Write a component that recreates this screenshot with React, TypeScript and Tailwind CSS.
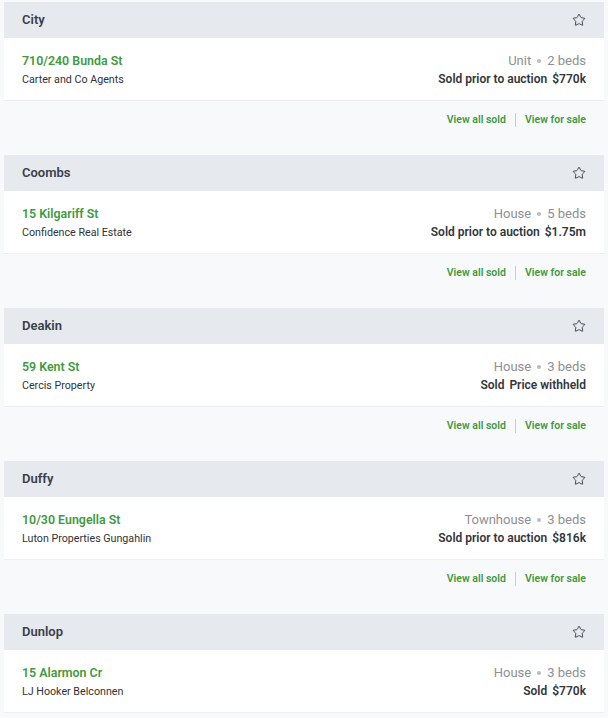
import { Star } from 'lucide-react';

interface Suburb {
  name: string;
  address: string;
  agent: string;
  type: string;
  beds: number;
  method: string;
  price: string;
}

const suburbs: Suburb[] = [
  { name: 'City', address: '710/240 Bunda St', agent: 'Carter and Co Agents', type: 'Unit', beds: 2, method: 'Sold prior to auction', price: '$770k' },
  { name: 'Coombs', address: '15 Kilgariff St', agent: 'Confidence Real Estate', type: 'House', beds: 5, method: 'Sold prior to auction', price: '$1.75m' },
  { name: 'Deakin', address: '59 Kent St', agent: 'Cercis Property', type: 'House', beds: 3, method: 'Sold', price: 'Price withheld' },
  { name: 'Duffy', address: '10/30 Eungella St', agent: 'Luton Properties Gungahlin', type: 'Townhouse', beds: 3, method: 'Sold prior to auction', price: '$816k' },
  { name: 'Dunlop', address: '15 Alarmon Cr', agent: 'LJ Hooker Belconnen', type: 'House', beds: 3, method: 'Sold', price: '$770k' },
];

function SuburbCard({ suburb }: { suburb: Suburb }) {
  return (
    <div className="mx-1">
      {/* Suburb header */}
      <div className="flex h-9 items-center justify-between bg-[#e6e9ed] px-[18px]">
        <h3 className="text-[13px] font-semibold text-[#3a3f4a]">{suburb.name}</h3>
        <Star className="h-[14px] w-[14px] text-[#3a3f4a]" strokeWidth={1.6} />
      </div>

      {/* Latest sale */}
      <div className="flex h-[63px] items-center justify-between border-b border-[#eceef1] bg-white px-[18px]">
        <div className="flex flex-col gap-[2px] pt-[1px]">
          <span className="text-[12.4px] font-semibold leading-[18px] text-[#3f9a3f]">{suburb.address}</span>
          <span className="text-[10.7px] leading-[16px] text-[#2f3338]">{suburb.agent}</span>
        </div>
        <div className="flex flex-col items-end gap-[1px]">
          <span className="flex items-center gap-[6px] text-[13px] leading-[18px] text-[#8d8f93]">
            {suburb.type}
            <span className="h-[4px] w-[4px] rounded-full bg-[#b9bcc0]" />
            {suburb.beds} beds
          </span>
          <span className="text-[12px] font-semibold leading-[16px] text-[#33363b]">
            {suburb.method}
            <span className="ml-[5px]">{suburb.price}</span>
          </span>
        </div>
      </div>

      {/* Links */}
      <div className="flex h-[54px] items-center justify-end gap-[9px] px-[18px] pb-[18px] pt-[2px]">
        <a className="text-[10.5px] font-semibold text-[#3f9a3f]">View all sold</a>
        <span className="h-[14px] w-px bg-[#c9ccd0]" />
        <a className="text-[10.5px] font-semibold text-[#3f9a3f]">View for sale</a>
      </div>
    </div>
  );
}

export default function App() {
  return (
    <div className="min-h-[718px] bg-[#f8f9fb] pt-[2px]" style={{ fontFamily: 'Roboto, "Liberation Sans", sans-serif' }}>
      {suburbs.map((s) => (
        <SuburbCard key={s.name} suburb={s} />
      ))}
    </div>
  );
}
